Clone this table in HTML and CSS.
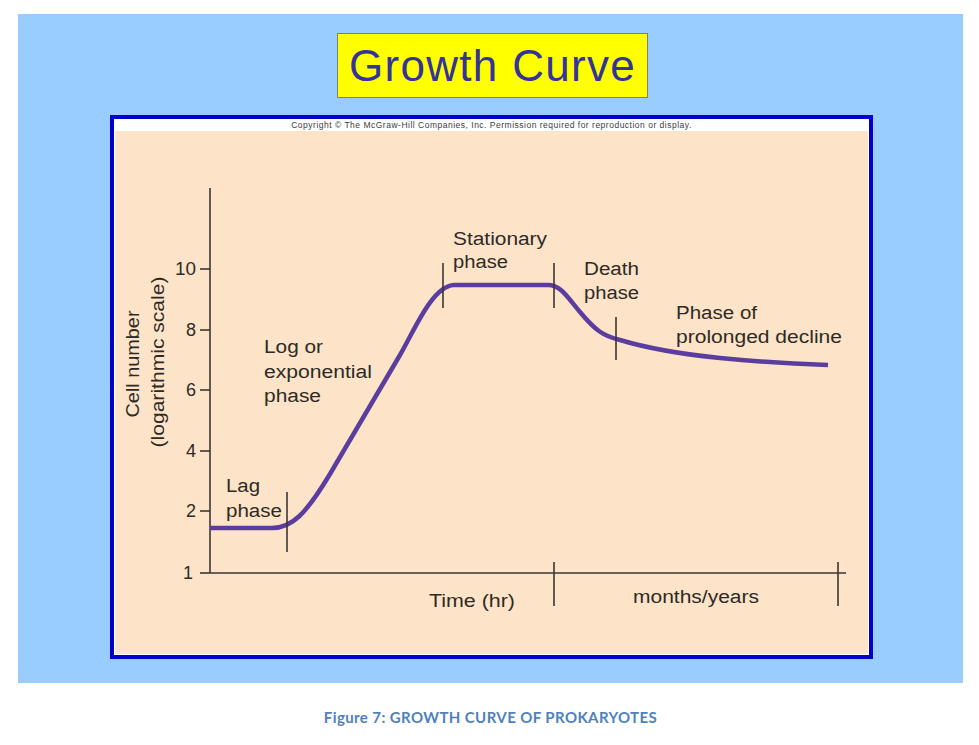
FILE: index.html
```html
<!DOCTYPE html>
<html lang="en">
<head>
<meta charset="utf-8">
<title>Growth Curve</title>
<link rel="stylesheet" href="styles.css">
</head>
<body>
<div class="page">
  <div class="slide">
    <div class="title">Growth Curve</div>
    <div class="frame">
      <div class="copyright">Copyright © The McGraw-Hill Companies, Inc. Permission required for reproduction or display.</div>
      <div class="plot">
        <svg class="chart" width="753" height="523" viewBox="115 131 753 523" xmlns="http://www.w3.org/2000/svg">
          <g class="axis">
            <line x1="210" y1="188" x2="210" y2="573"/>
            <line x1="210" y1="573" x2="846" y2="573"/>
            <line x1="200" y1="269" x2="210" y2="269"/>
            <line x1="200" y1="330" x2="210" y2="330"/>
            <line x1="200" y1="390" x2="210" y2="390"/>
            <line x1="200" y1="451" x2="210" y2="451"/>
            <line x1="200" y1="511" x2="210" y2="511"/>
            <line x1="200" y1="573" x2="210" y2="573"/>
            <line x1="554" y1="562" x2="554" y2="606"/>
            <line x1="838" y1="562" x2="838" y2="606"/>
          </g>
          <path class="curve" d="M210,528 L272,528 C292,528 306,514 330,474 L400,355 C414,331.2 432,286 454,285 L548,285 C560,285 566,295 580,312 C595,330 603,336 620,340 C650,349 680,354 720,358 C760,362 800,364 828,365"/>
          <g class="axis">
            <line x1="287" y1="492" x2="287" y2="552"/>
            <line x1="443" y1="263" x2="443" y2="308"/>
            <line x1="554" y1="263" x2="554" y2="308"/>
            <line x1="616" y1="317" x2="616" y2="360"/>
          </g>
          <g class="num">
            <text x="196" y="275" textLength="21" lengthAdjust="spacingAndGlyphs">10</text>
            <text x="196" y="336">8</text>
            <text x="196" y="396">6</text>
            <text x="196" y="457">4</text>
            <text x="196" y="517">2</text>
            <text x="193" y="579">1</text>
          </g>
          <g class="lbl">
            <text transform="translate(139,364) rotate(-90)" text-anchor="middle" textLength="107" lengthAdjust="spacingAndGlyphs">Cell number</text>
            <text transform="translate(164,362) rotate(-90)" text-anchor="middle" textLength="171" lengthAdjust="spacingAndGlyphs">(logarithmic scale)</text>
            <text x="453" y="245" textLength="94" lengthAdjust="spacingAndGlyphs">Stationary</text>
            <text x="453" y="268" textLength="55" lengthAdjust="spacingAndGlyphs">phase</text>
            <text x="584" y="275" textLength="55" lengthAdjust="spacingAndGlyphs">Death</text>
            <text x="584" y="299" textLength="55" lengthAdjust="spacingAndGlyphs">phase</text>
            <text x="676" y="319" textLength="81" lengthAdjust="spacingAndGlyphs">Phase of</text>
            <text x="676" y="343" textLength="166" lengthAdjust="spacingAndGlyphs">prolonged decline</text>
            <text x="264" y="353" textLength="59" lengthAdjust="spacingAndGlyphs">Log or</text>
            <text x="264" y="378" textLength="108" lengthAdjust="spacingAndGlyphs">exponential</text>
            <text x="264" y="402" textLength="57" lengthAdjust="spacingAndGlyphs">phase</text>
            <text x="226" y="492" textLength="34" lengthAdjust="spacingAndGlyphs">Lag</text>
            <text x="226" y="517" textLength="56" lengthAdjust="spacingAndGlyphs">phase</text>
            <text x="429" y="607" textLength="86" lengthAdjust="spacingAndGlyphs">Time (hr)</text>
            <text x="633" y="603" textLength="126" lengthAdjust="spacingAndGlyphs">months/years</text>
          </g>
        </svg>
      </div>
    </div>
  </div>
  <p class="caption">Figure 7: GROWTH CURVE OF PROKARYOTES</p>
</div>
</body>
</html>
```

FILE: styles.css
```css
body {
  margin: 0;
  background: #ffffff;
  font-family: "Liberation Sans", Arial, sans-serif;
}

.page {
  width: 945px;
  padding: 14px 0 0 18px;
}

.slide {
  width: 945px;
  height: 669px;
  box-sizing: border-box;
  padding-top: 19px;
  background: #99ccff;
  display: flex;
  flex-direction: column;
  align-items: flex-start;
}

.title {
  margin-left: 319px;
  width: 311px;
  height: 65px;
  box-sizing: border-box;
  border: 1px solid #7f7f7f;
  background: #ffff00;
  display: flex;
  align-items: center;
  justify-content: center;
  font-size: 44px;
  line-height: 1;
  letter-spacing: 1.3px;
  color: #333399;
}

.frame {
  margin-top: 17px;
  margin-left: 92px;
  width: 763px;
  height: 544px;
  box-sizing: border-box;
  border: 4px solid #0000c8;
  padding: 0 1px 1px 1px;
  background: #ffffff;
  display: flex;
  flex-direction: column;
}

.copyright {
  height: 12px;
  line-height: 12px;
  font-size: 8.5px;
  letter-spacing: 0.5px;
  text-align: center;
  color: #3c3c3c;
  white-space: nowrap;
}

.plot {
  flex: 1;
  background: #fde4c8;
}

.chart {
  display: block;
}

.axis line {
  stroke: #3a3530;
  stroke-width: 1.6;
}

.curve {
  fill: none;
  stroke: #5a3d9f;
  stroke-width: 4.5;
  stroke-linejoin: round;
}

.num text {
  font-family: "Liberation Sans", Arial, sans-serif;
  font-size: 18px;
  fill: #2e2a26;
  text-anchor: end;
}

.lbl text {
  font-family: "Liberation Sans", Arial, sans-serif;
  font-size: 18px;
  fill: #2e2a26;
}

.caption {
  margin: 26px 0 0 0;
  text-align: center;
  font-family: Lato, "Open Sans", sans-serif;
  font-weight: 700;
  font-size: 15px;
  letter-spacing: 0.4px;
  line-height: 17px;
  color: #4f81bd;
}
```
